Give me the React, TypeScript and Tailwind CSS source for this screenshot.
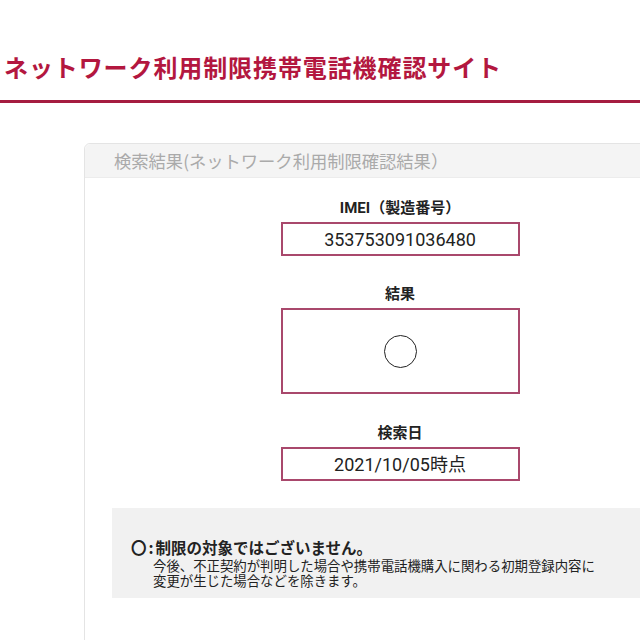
import React from 'react';

const jp = "font-['Roboto','Noto_Sans_CJK_JP',sans-serif]";

function Field({ label, children, tall }: { label: string; children: React.ReactNode; tall?: boolean }) {
  return (
    <div className="flex flex-col items-center">
      <div className="text-[15px] leading-[20px] font-bold text-[#222]">{label}</div>
      <div
        className={`mt-[4px] w-[239px] border-2 border-[#a9486c] flex items-center justify-center text-[18px] text-[#222] ${
          tall ? 'h-[86px]' : 'h-[34px]'
        }`}
      >
        {children}
      </div>
    </div>
  );
}

export default function App() {
  return (
    <div className={`w-[640px] h-[640px] overflow-hidden bg-white ${jp}`}>
      <div className="h-[100px] pt-[52px] pl-[4px]">
        <h1 className="text-[24px] leading-[34px] font-bold text-[#b3173f] tracking-[0.9px] whitespace-nowrap">
          ネットワーク利用制限携帯電話機確認サイト
        </h1>
      </div>
      <div className="h-[3px] bg-[#a51c40]" />

      <div className="pl-[84px] pt-[40px]">
        <div className="w-[632px] border border-[#e4e4e4] rounded-tl-[6px] bg-white">
          <div className="h-[34px] bg-[#f4f4f4] border-b border-[#ececec] pl-[29px] flex items-center text-[17.3px] text-[#aaaaaa] whitespace-nowrap rounded-tl-[6px] font-['Noto_Sans_CJK_JP',sans-serif]">
            検索結果(ネットワーク利用制限確認結果）
          </div>

          <div className="pt-[20px] flex flex-col">
            <Field label="IMEI（製造番号）">353753091036480</Field>
            <div className="mt-[28px]">
              <Field label="結果" tall>
                <div className="w-[33px] h-[33px] rounded-full border-[1.5px] border-[#222]" />
              </Field>
            </div>
            <div className="mt-[29px]">
              <Field label="検索日">2021/10/05時点</Field>
            </div>

            <div className="ml-[27px] mt-[27px] h-[90px] bg-[#f1f1f1] pt-[30px] pl-[19px] text-[#222] whitespace-nowrap">
              <div className="text-[15.5px] leading-[19px] font-bold">
                〇<span className="mx-[2px] font-['Noto_Sans_CJK_JP',sans-serif]">:</span>制限の対象ではございません。
              </div>
              <div className="pl-[22px] text-[13.4px] leading-[15px]">
                今後、不正契約が判明した場合や携帯電話機購入に関わる初期登録内容に
              </div>
              <div className="pl-[22px] text-[13.4px] leading-[15px]">変更が生じた場合などを除きます。</div>
            </div>
            <div className="h-[60px]" />
          </div>
        </div>
      </div>
    </div>
  );
}
